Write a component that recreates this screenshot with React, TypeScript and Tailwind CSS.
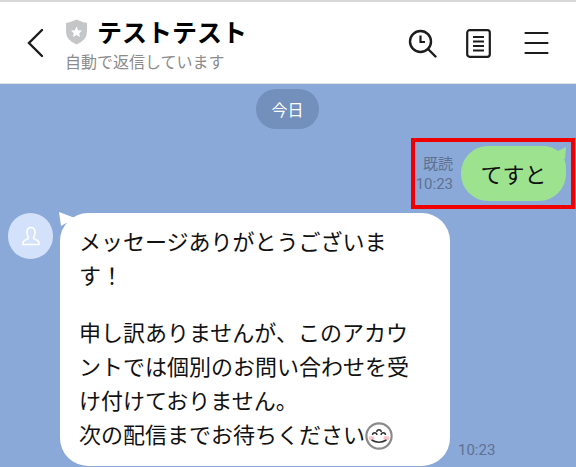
const jp = 'font-["Noto_Sans_CJK_JP","Noto_Sans",sans-serif]';

function ShieldIcon() {
  return (
    <svg width="23" height="26" viewBox="0 0 23 26" className="shrink-0">
      <path d="M1 4 Q6 3 11.5 0.5 Q17 3 22 4 L22 13 Q22 21 11.5 25.5 Q1 21 1 13 Z" fill="#c4c6c8" />
      <path d="M11.5 7.5 L13.2 11.2 L17 11.6 L14.2 14.2 L15 18 L11.5 16 L8 18 L8.8 14.2 L6 11.6 L9.8 11.2 Z" fill="#fff" />
    </svg>
  );
}

function HeaderIcons() {
  return (
    <div className="flex items-center pt-[1px]">
      <svg width="29" height="29" viewBox="0 0 29 29" fill="none" stroke="#1c1c1c" strokeWidth="2.4">
        <circle cx="12.5" cy="12.5" r="10.5" />
        <path d="M12.5 6.5 V13 H17" strokeWidth="2.2" />
        <path d="M20 20 L27.5 27.5" strokeLinecap="round" />
      </svg>
      <svg width="25" height="29" viewBox="0 0 25 29" fill="none" stroke="#1c1c1c" className="ml-[29px]">
        <rect x="1.2" y="1.2" width="22.6" height="26.6" rx="2.5" strokeWidth="2.2" />
        <path d="M7 8 H18 M7 12.5 H18 M7 17 H18 M7 21.5 H18" strokeWidth="2" />
      </svg>
      <svg width="25" height="24" viewBox="0 0 25 24" fill="none" stroke="#1c1c1c" strokeWidth="2.2" strokeLinecap="round" className="ml-[33px]">
        <path d="M1.5 2 H23.5 M1.5 12 H23.5 M1.5 22 H23.5" />
      </svg>
    </div>
  );
}

function Header() {
  return (
    <header className="h-[84px] shrink-0 border-t-[2px] border-b-[1px] border-t-[#d8d8d8] border-b-[#dfe3e8] bg-white flex items-center pl-[26px] pr-[27px]">
      <svg width="18" height="30" viewBox="0 0 18 30" fill="none" stroke="#1c1c1c" strokeWidth="2.4" strokeLinecap="round" className="mt-[1px] shrink-0">
        <path d="M16 2 L3 15 L16 28" />
      </svg>
      <div className="ml-[21px] flex-1 flex flex-col">
        <div className="flex items-center h-[36px]">
          <ShieldIcon />
          <span className="ml-[9px] text-[25px] font-bold leading-none text-black">テストテスト</span>
        </div>
        <span className="text-[16px] leading-[22px] text-[#8c8c8c]">自動で返信しています</span>
      </div>
      <HeaderIcons />
    </header>
  );
}

function SentRow() {
  return (
    <div className="relative flex justify-end items-center mt-[9px] pr-[10px] h-[71px]">
      <div className="flex flex-col items-end text-[#5f7190] mr-[8px] mt-[1px]">
        <span className="text-[15px] leading-[20px]">既読</span>
        <span className="text-[15px] leading-[22px] font-['Roboto']">10:23</span>
      </div>
      <div className="relative w-[105px] h-[55px] rounded-[27px] rounded-tr-[22px] bg-[#9de38f] flex items-center justify-center text-[22px] text-[#111]">
        てすと
        <svg width="14" height="12" viewBox="0 0 14 12" className="absolute right-0 top-[1px]">
          <path d="M14 0 L13 12 L2 6 Z" fill="#9de38f" />
        </svg>
      </div>
      <div className="absolute inset-y-0 left-[411px] right-[1px] border-[4px] border-[#f00000]" />
    </div>
  );
}

function ReceivedRow() {
  return (
    <div className="flex items-start mt-[4px] pl-[8px]">
      <div className="w-[45px] h-[46px] rounded-full bg-[#d3e1fb] flex items-center justify-center shrink-0">
        <svg width="18" height="20" viewBox="0 0 18 20" fill="none" stroke="#fff" strokeWidth="1.6">
          <path d="M9 1.5 C5.8 1.5 5 4 5 6.5 C5 9.5 6.5 10.5 6.5 12 C6.5 13.5 1 14 1 16.5 V18.5 H17 V16.5 C17 14 11.5 13.5 11.5 12 C11.5 10.5 13 9.5 13 6.5 C13 4 12.2 1.5 9 1.5 Z" strokeLinejoin="round" />
        </svg>
      </div>
      <div className="relative ml-[7px] w-[390px] h-[253px] bg-white rounded-[28px] pl-[19px] pt-[10px] text-[22px] leading-[34px] text-[#111]">
        <svg width="16" height="14" viewBox="0 0 16 14" className="absolute -left-[1px] -top-[1px]">
          <path d="M0 0 L16 6 L2 14 Z" fill="#fff" />
        </svg>
        <p>メッセージありがとうございま</p>
        <p>す！</p>
        <p className="h-[23px]" />
        <p>申し訳ありませんが、このアカウ</p>
        <p>ントでは個別のお問い合わせを受</p>
        <p>け付けておりません。</p>
        <p className="flex items-center">
          次の配信までお待ちください
          <svg width="28" height="28" viewBox="0 0 28 28" className="shrink-0 mt-[5px]">
            <circle cx="14" cy="14" r="12.6" fill="#fff" stroke="#8a8a8a" strokeWidth="2.2" />
            <ellipse cx="6.5" cy="16" rx="3" ry="2" fill="#f5c6cc" />
            <ellipse cx="21.5" cy="16" rx="3" ry="2" fill="#f5c6cc" />
            <path d="M6.5 18 Q14 22.5 21.5 18" fill="none" stroke="#333" strokeWidth="1.5" />
            <path d="M7.5 13 a2.2 2.2 0 0 1 4.4 0 M16.1 13 a2.2 2.2 0 0 1 4.4 0 M11.8 10 a2.2 2.2 0 0 1 4.4 0" fill="none" stroke="#333" strokeWidth="1.4" />
          </svg>
        </p>
      </div>
      <span className="self-end ml-[8px] mb-[6px] text-[15px] leading-[20px] text-[#5f7190] font-['Roboto']">10:23</span>
    </div>
  );
}

export default function App() {
  return (
    <div className={`w-[576px] h-[467px] flex flex-col overflow-hidden bg-[#8aa9d8] ${jp}`}>
      <Header />
      <main className="flex-1 flex flex-col">
        <div className="flex justify-center mt-[5px] pr-[1px]">
          <span className="w-[63px] h-[40px] rounded-[20px] bg-[#7290bb] text-white text-[16px] flex items-center justify-center">今日</span>
        </div>
        <SentRow />
        <ReceivedRow />
      </main>
    </div>
  );
}
